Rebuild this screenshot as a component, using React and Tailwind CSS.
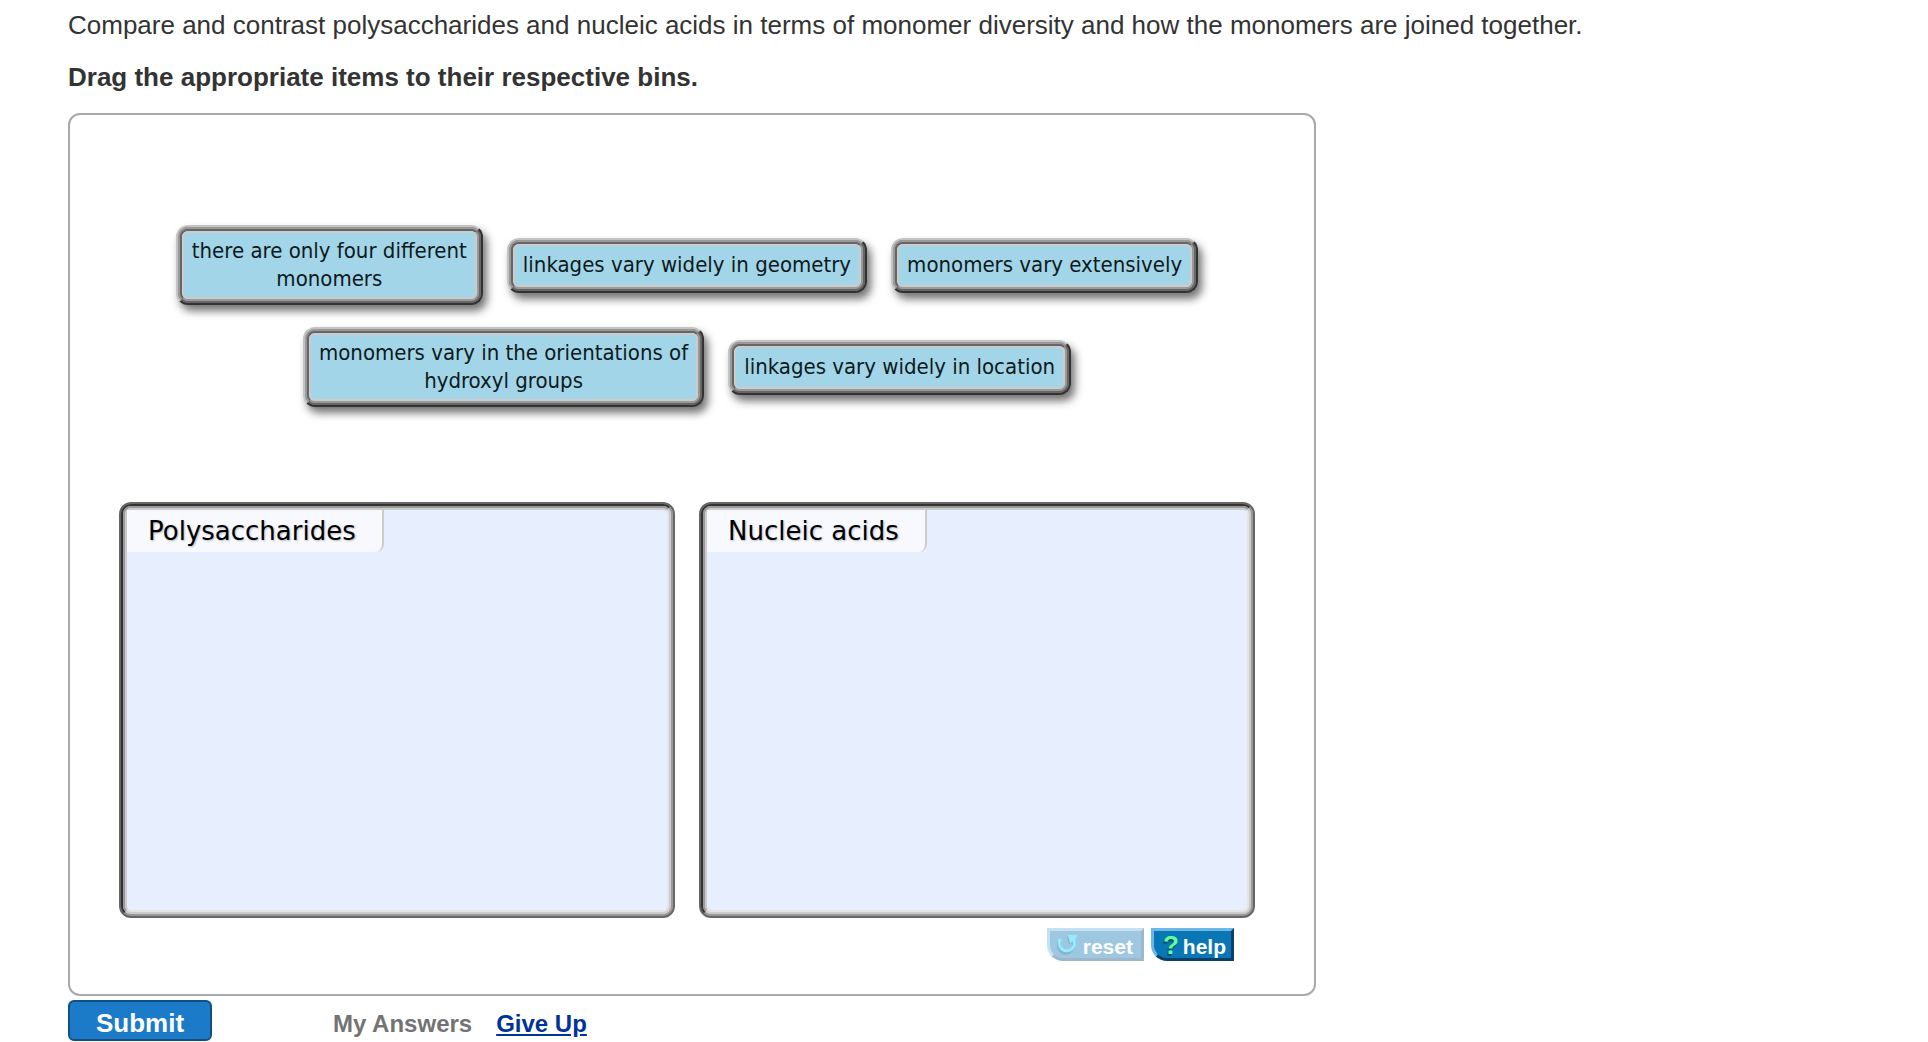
const cardRows = [
  [
    ["there are only four different", "monomers"],
    ["linkages vary widely in geometry"],
    ["monomers vary extensively"],
  ],
  [
    ["monomers vary in the orientations of", "hydroxyl groups"],
    ["linkages vary widely in location"],
  ],
];

const bins = ["Polysaccharides", "Nucleic acids"];

// The bevel is four nested 2px rings, from light to dark
const Card = ({ lines }) => (
  <button
    type="button"
    className="cursor-grab rounded-xl border-2 border-t-[#c4c4c4] border-l-[#c4c4c4] border-b-[#333333] border-r-[#333333] bg-[#808080] shadow-[4px_6px_9px_rgba(0,0,0,0.55)]"
  >
    <span className="block rounded-[10px] border-2 border-t-[#999999] border-l-[#999999] border-b-[#666666] border-r-[#666666]">
      <span className="block rounded-lg border-2 border-t-[#666666] border-l-[#666666] border-b-[#999999] border-r-[#999999] bg-[#cccccc]">
        <span className="flex min-h-[43px] flex-col justify-center rounded-md border-2 border-[#cccccc] bg-[#a3d5e8] px-2 py-1 text-[22px] leading-7 text-[#0c1a20]">
          {lines.map((line) => (
            <span key={line} className="block whitespace-nowrap">{line}</span>
          ))}
        </span>
      </span>
    </span>
  </button>
);

const Bin = ({ label }) => (
  <section className="flex h-[416px] flex-1 rounded-xl border-2 border-[#666666] bg-[#888888]">
    <div className="flex flex-1 rounded-[10px] border-2 border-t-[#333333] border-l-[#333333] border-b-[#999999] border-r-[#999999] bg-[#b0b0b0]">
      <div className="flex flex-1 rounded-lg border-2 border-t-[#999999] border-l-[#999999] border-b-[#cccccc] border-r-[#cccccc] bg-[#cccccc]">
        <div className="flex-1 rounded-md border-2 border-t-[#cccccc] border-l-[#cccccc] border-b-[#e4e4e4] border-r-[#e4e4e4] bg-[#e7eefe]">
          <h2 className="w-fit rounded-br-lg border-r-2 border-[#cccccc] bg-[#f7f9ff] py-[5px] pr-[26px] pl-[21px] text-[26px] leading-8 font-normal text-black text-shadow-[1px_1px_2px_rgba(0,0,0,0.25)]">
            {label}
          </h2>
        </div>
      </div>
    </div>
  </section>
);

const ResetIcon = () => (
  <svg width="22" height="22" viewBox="0 0 22 22" aria-hidden="true">
    <g transform="translate(-1 2)" fill="#84b4d0" stroke="#84b4d0">
      <path d="M3.5 5.5A7.6 7.6 0 1 0 16.5 6" fill="none" strokeWidth="3" />
      <path d="M11 1h9l-7 8z" stroke="none" />
    </g>
    <path d="M3.5 5A7.6 7.6 0 1 0 16.5 5.5" fill="none" stroke="#96ebff" strokeWidth="3" />
    <path d="M11 1h9.5l-1.5 3-6 5.5z" fill="#96ebff" />
  </svg>
);

const App = () => (
  <main className="bg-white px-[68px] pt-[9px] font-['Liberation_Sans',sans-serif] text-[26px] leading-8 text-[#333333]">
    <p>
      Compare and contrast polysaccharides and nucleic acids in terms of monomer diversity and how the monomers are joined together.
    </p>
    <p className="mt-5 font-bold">Drag the appropriate items to their respective bins.</p>

    {/* Sorting area */}
    <div className="mt-5 w-full max-w-[1248px] rounded-xl border-2 border-[#a9a9a9] pr-[59px] pb-[33px] pl-[49px]">
      <div className="flex flex-col gap-[22px] pt-[110px] pb-[95px] font-['DejaVu_Sans_Condensed','DejaVu_Sans',sans-serif]">
        {cardRows.map((row, idx) => (
          <div key={idx} className="flex items-center justify-center gap-6">
            {row.map((lines) => (
              <Card key={lines[0]} lines={lines} />
            ))}
          </div>
        ))}
      </div>

      <div className="flex gap-6 font-['DejaVu_Sans',sans-serif]">
        {bins.map((label) => (
          <Bin key={label} label={label} />
        ))}
      </div>

      <div className="mt-[10px] flex justify-end gap-[7px] pr-[21px] text-[21px] leading-6 font-bold text-white">
        <button
          type="button"
          className="flex h-[33px] items-center gap-1 rounded-bl-2xl border-3 border-t-[#c5e2f2] border-l-[#c5e2f2] border-b-[#9db8ca] border-r-[#9db8ca] bg-[#9ec8e1] pr-2 pl-[7px]"
        >
          <ResetIcon />
          <span className="pt-1">reset</span>
        </button>
        <button
          type="button"
          className="flex h-[33px] items-center gap-1 rounded-bl-2xl border-3 border-t-[#6cb8e4] border-l-[#6cb8e4] border-b-[#0b4168] border-r-[#0b4168] bg-[#0976b6] pr-[5px] pl-[9px]"
        >
          <span aria-hidden="true" className="text-[26px] text-[#5cff9a] text-shadow-[-1px_2px_1px_#0b4168]">?</span>
          <span className="pt-1">help</span>
        </button>
      </div>
    </div>

    {/* Actions */}
    <div className="mt-1 flex items-center font-bold">
      <button type="button" className="h-[41px] w-36 rounded-md border-2 border-[#0f5080] bg-[#1c7bc9] pt-1 text-white">
        Submit
      </button>
      <span className="mt-1.5 ml-[121px] text-2xl text-[#737373]">My Answers</span>
      <a href="#give-up" className="mt-1.5 ml-6 text-2xl text-[#003399] underline">Give Up</a>
    </div>
  </main>
);

export default App;
